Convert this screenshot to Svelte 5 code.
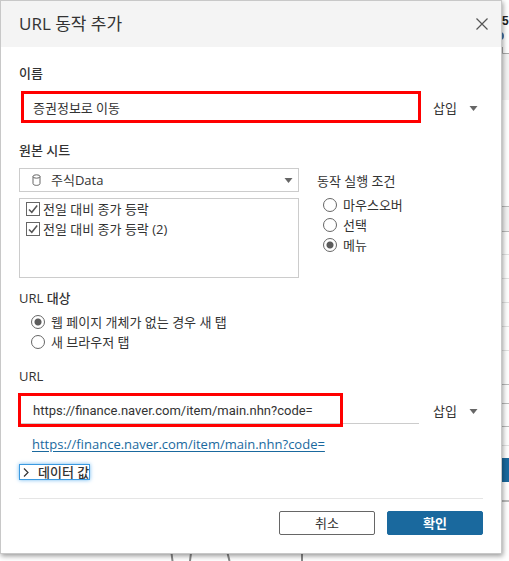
<script>
  let name = '증권정보로 이동';
  let url = 'https://finance.naver.com/item/main.nhn?code=';
  let source = '주식Data';
  let trigger = '메뉴';
  let target = '웹 페이지 개체가 없는 경우 새 탭';
  let sheets = [
    { label: '전일 대비 종가 등락', checked: true },
    { label: '전일 대비 종가 등락 (2)', checked: true },
  ];
  const triggers = ['마우스오버', '선택', '메뉴'];
  const targets = ['웹 페이지 개체가 없는 경우 새 탭', '새 브라우저 탭'];
  const rules = [254, 278, 302, 326, 350, 445];
</script>

<style>
  :global(body) {
    margin: 0;
    background: #fff;
    color: #333;
    font: 13px/20px "Open Sans", "Noto Sans CJK KR", sans-serif;
  }

  .page {
    position: relative;
    overflow: hidden;
    padding: 0 7px 7px 0;
  }

  .behind {
    position: absolute;
    top: 0;
    right: 0;
  }

  .under {
    position: absolute;
    left: 160px;
    bottom: 0;
  }

  .dialog {
    position: relative;
    background: #fff;
    border: 1px solid #c8c8c8;
    box-shadow: 1px 2px 5px rgba(0, 0, 0, 0.4);
  }

  header {
    display: flex;
    align-items: center;
    justify-content: space-between;
    height: 46px;
    padding: 0 11px 0 18px;
    background: #f4f4f4;
  }

  h1 {
    margin: 0;
    font-size: 17px;
    font-weight: normal;
  }

  button {
    padding: 0;
    border: none;
    background: none;
    color: inherit;
    font: inherit;
    cursor: pointer;
  }

  .close {
    display: flex;
    padding: 2px;
  }

  .body {
    padding: 16px 18px 0;
  }

  h2, .heading {
    display: block;
    margin: 0;
    font-size: 13px;
    font-weight: 500;
    line-height: 20px;
  }

  .field {
    display: flex;
    align-items: center;
    position: relative;
    margin: 12px 0 19px;
    padding-right: 5px;
  }

  .field input {
    flex: 1;
    min-width: 0;
    height: 26px;
    box-sizing: border-box;
    margin-right: 14px;
    padding: 0 14px;
    border: none;
    border-bottom: 1px solid #ccc;
    background: none;
    color: #333;
    font: inherit;
    font-family: Roboto, "Noto Sans CJK KR", sans-serif;
    outline: none;
  }

  #name {
    border-color: transparent;
  }

  .insert {
    display: flex;
    align-items: center;
    gap: 12px;
  }

  .mark {
    position: absolute;
    box-sizing: border-box;
    border: 3px solid #f00;
    pointer-events: none;
  }

  .mark.name {
    top: -4px;
    left: 2px;
    right: 62px;
    height: 32px;
  }

  .mark.url {
    top: -5px;
    left: -1px;
    width: 325px;
    height: 34px;
  }

  .columns {
    display: flex;
    gap: 18px;
    margin: 8px 0 10px;
  }

  .sheets {
    flex: 1;
  }

  .picker {
    display: flex;
    align-items: center;
    position: relative;
  }

  .picker svg {
    position: absolute;
    pointer-events: none;
  }

  .picker .db {
    left: 13px;
  }

  .picker :global(.arrow) {
    right: 6px;
  }

  select {
    appearance: none;
    width: 100%;
    height: 24px;
    box-sizing: border-box;
    padding: 0 20px 0 31px;
    border: 1px solid #ccc;
    border-radius: 0;
    background: #fff;
    color: #333;
    font: inherit;
  }

  .list {
    height: 80px;
    box-sizing: border-box;
    margin-top: 6px;
    padding: 0 6px;
    border: 1px solid #ccc;
  }

  .option {
    display: flex;
    align-items: center;
    gap: 6px;
    height: 20px;
  }

  .list .option {
    gap: 3px;
  }

  .option input {
    appearance: none;
    flex: none;
    width: 14px;
    height: 14px;
    box-sizing: border-box;
    margin: 0;
    border: 1px solid #666;
    background: #fff center no-repeat;
  }

  .option input[type="radio"] {
    border-radius: 50%;
  }

  .option input[type="radio"]:checked {
    background-image: radial-gradient(circle, #5c5c5c 3px, transparent 4px);
  }

  .option input[type="checkbox"]:checked {
    background-image: url("data:image/svg+xml,%3Csvg xmlns='http://www.w3.org/2000/svg' width='12' height='12' fill='none' stroke='%23555' stroke-width='1.5'%3E%3Cpath d='M2 6.5L4.8 9.3L10.2 2.5'/%3E%3C/svg%3E");
  }

  .trigger {
    flex: 0 0 166px;
    padding-top: 3px;
  }

  .trigger .option {
    padding-left: 6px;
  }

  .trigger .heading {
    margin-bottom: 4px;
    font-weight: normal;
  }

  .targets {
    margin: 4px 0 14px;
    padding-left: 12px;
  }

  .link {
    display: block;
    margin: -9px 0 10px 13px;
    color: #1a699e;
    text-underline-offset: 2px;
  }

  .data {
    display: flex;
    align-items: center;
    gap: 9px;
    height: 16px;
    padding-left: 3px;
    border: 1px solid #3c9ae0;
    box-shadow: 0 0 4px #6cb8f0;
    font-weight: 500;
    line-height: 14px;
  }

  footer {
    display: flex;
    justify-content: flex-end;
    gap: 12px;
    margin: 18px 18px 0;
    padding: 12px 0 18px;
    border-top: 1px solid #e5e5e5;
  }

  footer button {
    width: 96px;
    height: 24px;
    box-sizing: border-box;
    border: 1px solid #666;
    border-radius: 2px;
    line-height: 20px;
  }

  footer .primary {
    border-color: #1a699e;
    background: #1a699e;
    color: #fff;
    font-weight: bold;
  }
</style>

{#snippet arrow(cls)}
  <svg class={cls} width="9" height="5" viewBox="0 0 9 5"><path d="M0.5 0H8.5L4.5 5Z" fill="#666" /></svg>
{/snippet}

<div class="page">
  <svg class="behind" width="8" height="504" viewBox="0 0 8 504">
    <rect y="54" width="8" height="46" fill="#f4f4f4" />
    <text x="1" y="25" font-size="12" font-weight="bold" font-family="Liberation Sans, sans-serif" fill="#222">5</text>
    <circle cx="-1" cy="36" r="4" fill="#4472a8" />
    <path d="M1.5 47V53.5H8" fill="none" stroke="#aaa" />
    <rect y="206" width="8" height="25" fill="#f4f4f4" />
    <path d="M0 206.5H8M0 231.5H8M0 384.5H8M0 403.5H8M0 426.5H8" stroke="#bbb" />
    {#each rules as y}
      <path d="M0 {y}.5H8" stroke="#e2e2e2" />
    {/each}
    <rect y="458" width="8" height="24" fill="#1a699e" />
    <path d="M0 501H8" stroke="#bbb" stroke-width="2" />
  </svg>
  <svg class="under" width="150" height="8" viewBox="0 0 150 8" fill="none" stroke="#888" stroke-width="2">
    <path d="M11.5 0L12.5 8M31 0L30 8M67.5 0L69.5 8M142 0V8" />
  </svg>

  <div class="dialog" role="dialog" aria-labelledby="title">
    <header>
      <h1 id="title">URL 동작 추가</h1>
      <button class="close" aria-label="닫기">
        <svg width="12" height="12" viewBox="0 0 12 12" stroke="#555" stroke-width="1.2"><path d="M0.5 0.5L11.5 11.5M11.5 0.5L0.5 11.5" /></svg>
      </button>
    </header>

    <div class="body">
      <label class="heading" for="name">이름</label>
      <div class="field">
        <input id="name" type="text" bind:value={name} />
        <button class="insert">삽입 {@render arrow('')}</button>
        <span class="mark name"></span>
      </div>

      <label class="heading" for="source">원본 시트</label>
      <div class="columns">
        <div class="sheets">
          <div class="picker">
            <select id="source" bind:value={source}>
              <option>주식Data</option>
            </select>
            <svg class="db" width="9" height="12" viewBox="0 0 9 12" fill="none" stroke="#666">
              <ellipse cx="4.5" cy="2.5" rx="3.5" ry="1.7" />
              <path d="M1 2.5V9.5C1 12 8 12 8 9.5V2.5" />
            </svg>
            {@render arrow('arrow')}
          </div>
          <div class="list">
            {#each sheets as sheet}
              <label class="option"><input type="checkbox" bind:checked={sheet.checked} />{sheet.label}</label>
            {/each}
          </div>
        </div>
        <div class="trigger" role="radiogroup" aria-labelledby="trigger">
          <span class="heading" id="trigger">동작 실행 조건</span>
          {#each triggers as t}
            <label class="option"><input type="radio" name="trigger" value={t} bind:group={trigger} />{t}</label>
          {/each}
        </div>
      </div>

      <h2>URL 대상</h2>
      <div class="targets">
        {#each targets as t}
          <label class="option"><input type="radio" name="target" value={t} bind:group={target} />{t}</label>
        {/each}
      </div>

      <label class="heading" for="url">URL</label>
      <div class="field">
        <input id="url" type="text" bind:value={url} />
        <button class="insert">삽입 {@render arrow('')}</button>
        <span class="mark url"></span>
      </div>
      <a class="link" href={url}>{url}</a>
      <button class="data">
        <svg width="6" height="9" viewBox="0 0 6 9" fill="none" stroke="#333" stroke-width="1.2"><path d="M1 0.5L5 4.5L1 8.5" /></svg>
        데이터 값
      </button>
    </div>

    <footer>
      <button>취소</button>
      <button class="primary">확인</button>
    </footer>
  </div>
</div>
